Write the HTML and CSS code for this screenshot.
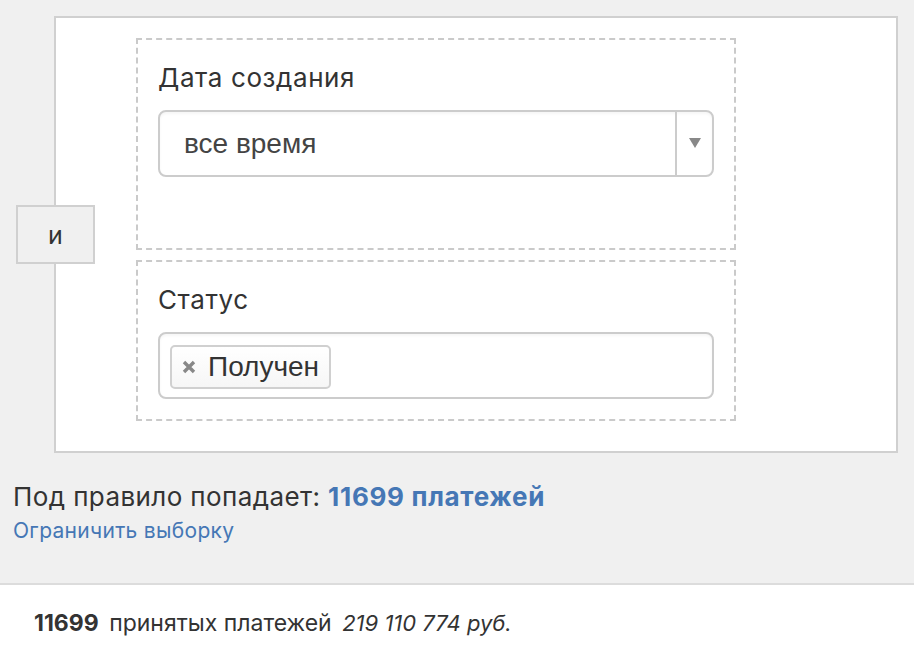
FILE: index.html
```html
<!DOCTYPE html>
<html>
<head>
  <title>Правило</title>
  <link rel="stylesheet" href="styles.css">
</head>
<body>
  <div class="rule-area">
    <div class="group">
      <div class="group-op">и</div>

      <div class="cond cond-date">
        <div class="cond-label">Дата создания</div>
        <div class="select">
          <span class="select-value">все время</span>
          <span class="select-arrow"><span class="tri"></span></span>
        </div>
      </div>

      <div class="cond">
        <div class="cond-label">Статус</div>
        <div class="tags-input">
          <span class="tag">
            <svg class="tag-x" width="14" height="14" viewBox="0 0 14 14">
              <path d="M2 2 L12 12 M12 2 L2 12" stroke="#888" stroke-width="3.4" stroke-linecap="butt"/>
            </svg>Получен</span>
        </div>
      </div>
    </div>

    <div class="match">Под правило попадает: <a href="#" class="match-count">11699 платежей</a></div>
    <a href="#" class="limit-link">Ограничить выборку</a>
  </div>

  <div class="summary">
    <b>11699</b> <span class="summary-text">принятых платежей</span> <i>219 110 774 руб.</i>
  </div>
</body>
</html>
```

FILE: styles.css
```css
body {
  margin: 0;
  background-color: #fff;
  color: #333;
  font-family: Inter, "Noto Sans", sans-serif;
}

a {
  text-decoration: none;
  color: #4577b5;
}

.rule-area {
  background-color: #f0f0f0;
  padding: 16px 16px 0 13px;
  height: 567px;
  border-bottom: 2px solid #dcdcdc;
}

.group {
  position: relative;
  margin-left: 41px;
  background-color: #fff;
  border: 2px solid #d0d0d0;
  padding: 20px 0 30px 80px;
}

.group-op {
  position: absolute;
  left: -40px;
  top: 187px;
  width: 75px;
  height: 55px;
  display: flex;
  align-items: center;
  justify-content: center;
  background-color: #f0f0f0;
  border: 2px solid #d0d0d0;
  font-size: 25px;
  color: #333;
}

.cond {
  width: 556px;
  border: 2px dashed #cacaca;
  padding: 22px 20px 20px 20px;
}

.cond + .cond {
  margin-top: 10px;
}

.cond-date {
  padding-bottom: 71px;
}

.cond-label {
  font-size: 26px;
  letter-spacing: 0.6px;
  line-height: 32px;
  margin-bottom: 16px;
  color: #333;
}

.select {
  display: flex;
  height: 63px;
  border: 2px solid #cccccc;
  border-radius: 8px;
  font-family: "Liberation Sans", Arial, sans-serif;
  box-shadow: inset 0 2px 3px rgba(0, 0, 0, 0.04);
}

.select-value {
  flex: 1;
  display: flex;
  align-items: center;
  padding-left: 24px;
  font-size: 28px;
  color: #444;
}

.select-arrow {
  width: 35px;
  border-left: 2px solid #cccccc;
  display: flex;
  align-items: center;
  justify-content: center;
}

.tri {
  width: 0;
  height: 0;
  border-left: 6px solid transparent;
  border-right: 6px solid transparent;
  border-top: 10px solid #888;
  margin-bottom: 2px;
}

.tags-input {
  border: 2px solid #cccccc;
  border-radius: 8px;
  padding: 11px 10px 0 10px;
  box-sizing: border-box;
  height: 67px;
  font-family: "Liberation Sans", Arial, sans-serif;
  box-shadow: inset 0 2px 3px rgba(0, 0, 0, 0.04);
}

.tag {
  display: inline-flex;
  align-items: center;
  height: 40px;
  padding: 0 10px 0 10px;
  border: 2px solid #d0d0d0;
  border-radius: 5px;
  background: linear-gradient(#fff, #f6f6f6);
  font-size: 28px;
  color: #333;
}

.tag-x {
  margin-right: 12px;
}

.match {
  margin-top: 28px;
  font-size: 26px;
  letter-spacing: 0.4px;
  line-height: 32px;
  color: #333;
}

.match-count {
  font-weight: 700;
  letter-spacing: 0.7px;
}

.limit-link {
  display: block;
  margin-top: 4px;
  font-size: 21px;
  letter-spacing: 0.3px;
  line-height: 28px;
}

.summary {
  padding: 24px 34px;
  font-size: 23px;
  color: #333;
}

.summary b {
  font-weight: 700;
  margin-right: 4px;
}

.summary i {
  margin-left: 4px;
  font-size: 22px;
}
```
